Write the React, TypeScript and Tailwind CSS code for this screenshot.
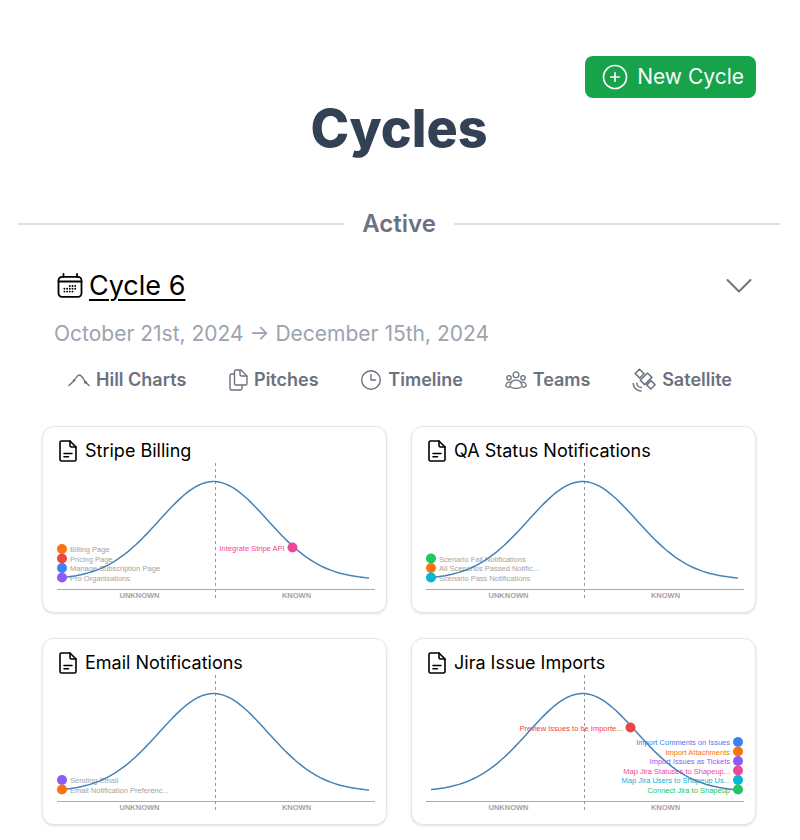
import React from 'react';

type Scope = {
  label: string;
  color: string;
  x: number;
  y: number;
  side?: 'left' | 'right';
  muted?: boolean;
};

type Pitch = {
  title: string;
  scopes: Scope[];
};

const COLORS = {
  orange: '#f97316',
  red: '#ef4444',
  blue: '#3b82f6',
  violet: '#8b5cf6',
  pink: '#ec4899',
  green: '#22c55e',
  cyan: '#06b6d4',
};

// Scopes at the foot of the hill stack upwards on either side
const START_X = 38;
const END_X = 652;
const FOOT_Y = 233;
const STEP = 19;

const pitches: Pitch[] = [
  {
    title: 'Stripe Billing',
    scopes: [
      { label: 'Billing Page', color: COLORS.orange, x: START_X, y: FOOT_Y - STEP * 3, muted: true },
      { label: 'Pricing Page', color: COLORS.red, x: START_X, y: FOOT_Y - STEP * 2, muted: true },
      { label: 'Manage Subscription Page', color: COLORS.blue, x: START_X, y: FOOT_Y - STEP, muted: true },
      { label: 'Pro Organisations', color: COLORS.violet, x: START_X, y: FOOT_Y, muted: true },
      { label: 'Integrate Stripe API', color: COLORS.pink, x: 499, y: 173, side: 'left' },
    ],
  },
  {
    title: 'QA Status Notifications',
    scopes: [
      { label: 'Scenario Fail Notifications', color: COLORS.green, x: START_X, y: FOOT_Y - STEP * 2, muted: true },
      { label: 'All Scenarios Passed Notific...', color: COLORS.orange, x: START_X, y: FOOT_Y - STEP, muted: true },
      { label: 'Scenario Pass Notifications', color: COLORS.cyan, x: START_X, y: FOOT_Y, muted: true },
    ],
  },
  {
    title: 'Email Notifications',
    scopes: [
      { label: 'Sending Email', color: COLORS.violet, x: START_X, y: FOOT_Y - STEP, muted: true },
      { label: 'Email Notification Preferenc...', color: COLORS.orange, x: START_X, y: FOOT_Y, muted: true },
    ],
  },
  {
    title: 'Jira Issue Imports',
    scopes: [
      { label: 'Preview Issues to be Importe...', color: COLORS.red, x: 437, y: 109, side: 'left' },
      { label: 'Import Comments on Issues', color: COLORS.blue, x: END_X, y: FOOT_Y - STEP * 5, side: 'left' },
      { label: 'Import Attachments', color: COLORS.orange, x: END_X, y: FOOT_Y - STEP * 4, side: 'left' },
      { label: 'Import Issues as Tickets', color: COLORS.violet, x: END_X, y: FOOT_Y - STEP * 3, side: 'left' },
      { label: 'Map Jira Statuses to Shapeup...', color: COLORS.pink, x: END_X, y: FOOT_Y - STEP * 2, side: 'left' },
      { label: 'Map Jira Users to Shapeup Us...', color: COLORS.cyan, x: END_X, y: FOOT_Y - STEP, side: 'left' },
      { label: 'Connect Jira to Shapeup', color: COLORS.green, x: END_X, y: FOOT_Y, side: 'left' },
    ],
  },
];

const hillPath = (() => {
  const points: string[] = [];
  for (let i = 0; i <= 88; i++) {
    const x = START_X + ((END_X - START_X) * i) / 88;
    const d = (x - 341) / 108;
    const y = 237 - 196 * Math.exp((-d * d) / 2);
    points.push(`${x.toFixed(1)} ${y.toFixed(1)}`);
  }
  return `M${points.join('L')}`;
})();

const HillChart = ({ scopes }: { scopes: Scope[] }) => (
  <svg viewBox="0 4 686 298" className="block w-full font-['Liberation_Sans',Arial,sans-serif]" role="img" aria-label="Hill chart">
    <line x1="345" y1="4" x2="345" y2="275" stroke="#999" strokeWidth="2" strokeDasharray="6 6" />
    <line x1="28" y1="257" x2="664" y2="257" stroke="#aaa" strokeWidth="2" />
    <text x="193" y="274" textAnchor="middle" className="text-[15px] font-bold" fill="#a3a3a3">UNKNOWN</text>
    <text x="507" y="274" textAnchor="middle" className="text-[15px] font-bold" fill="#a3a3a3">KNOWN</text>
    {scopes.map((scope) => (
      <text
        key={scope.label}
        x={scope.side === 'left' ? scope.x - 16 : scope.x + 16}
        y={scope.y + 6}
        textAnchor={scope.side === 'left' ? 'end' : 'start'}
        fill={scope.muted ? '#a3a3a3' : scope.color}
        className="text-[15px]"
      >
        {scope.label}
      </text>
    ))}
    <path d={hillPath} fill="none" stroke="#4682b4" strokeWidth="3" />
    {scopes.map((scope) => (
      <circle key={scope.label} cx={scope.x} cy={scope.y} r="10" fill={scope.color} />
    ))}
  </svg>
);

const CalendarIcon = () => (
  <svg viewBox="0 0 26 26" className="h-[26px] w-[26px]" fill="none" stroke="currentColor" strokeWidth="1.8" strokeLinecap="round" aria-hidden="true">
    <rect x="1.5" y="3.8" width="23" height="20" rx="3.5" />
    <path d="M1.5 8.500h23M6.500 1v3M20 1v3" />
    <path strokeWidth="1.900" d="M12.800 13h.01M15.500 13h.01M18.200 13h.01M7.400 15.800h.01M10.100 15.800h.01M12.800 15.800h.01M15.500 15.800h.01M18.200 15.800h.01M7.400 18.600h.01M10.100 18.600h.01M12.800 18.600h.01M15.500 18.600h.01" />
  </svg>
);

const DocumentIcon = () => (
  <svg viewBox="0 0 18 22" className="h-[22px] w-[18px]" fill="none" stroke="currentColor" strokeWidth="1.6" strokeLinecap="round" strokeLinejoin="round" aria-hidden="true">
    <path d="M11 1H2.5A1.5 1.5 0 0 0 1 2.5v17A1.5 1.5 0 0 0 2.5 21h13a1.5 1.5 0 0 0 1.5-1.5V7L11 1Z" />
    <path d="M11 1v4.5A1.5 1.5 0 0 0 12.5 7H17M5 13.5h8M5 16.7h4.5" />
  </svg>
);

const HillIcon = () => (
  <svg viewBox="0 0 22 14" className="h-[14px] w-[22px]" fill="none" stroke="currentColor" strokeWidth="1.4" strokeLinecap="round" aria-hidden="true">
    <path d="M1 12.5 6 7.8C8 5.500 8.800 2 11.300 2S15 5.500 17 8.500L21 12.500" />
    <circle cx="6" cy="7.300" r="1.200" fill="currentColor" stroke="none" />
    <circle cx="17.500" cy="9.200" r="1.500" fill="currentColor" stroke="none" />
  </svg>
);

const PitchesIcon = () => (
  <svg viewBox="0 0 20 22" className="h-[22px] w-5" fill="none" stroke="currentColor" strokeWidth="1.4" strokeLinejoin="round" aria-hidden="true">
    <path d="M13 1H8a1.5 1.5 0 0 0-1.5 1.5v12A1.5 1.5 0 0 0 8 16h9.5a1.5 1.5 0 0 0 1.5-1.5V7l-6-6Z" />
    <path d="M12 1v4.5A1.5 1.5 0 0 0 13.5 7H19M6.5 5h-3A1.5 1.5 0 0 0 2 6.5v13A1.5 1.5 0 0 0 3.5 21h9a1.5 1.5 0 0 0 1.5-1.5V16" />
  </svg>
);

const TimelineIcon = () => (
  <svg viewBox="0 0 22 22" className="h-[22px] w-[22px]" fill="none" stroke="currentColor" strokeWidth="1.4" strokeLinecap="round" strokeLinejoin="round" aria-hidden="true">
    <circle cx="11" cy="11" r="9.3" />
    <path d="M11 5.5V11h4.5" />
  </svg>
);

const TeamsIcon = () => (
  <svg viewBox="0 0 22 20" className="h-5 w-[22px]" fill="none" stroke="currentColor" strokeWidth="1.3" strokeLinejoin="round" aria-hidden="true">
    <circle cx="11" cy="4.8" r="2.9" />
    <circle cx="4" cy="7.8" r="2.2" />
    <circle cx="18" cy="7.8" r="2.2" />
    <path d="M11 10.2c-3.5 0-5.500 2.600-6 5.300-.3 1.500 2.500 2.900 6 2.900s6.300-1.400 6-2.900c-.5-2.700-2.500-5.300-6-5.300Z" />
    <path d="M5.800 12.200C3 11.500 1 13.300.8 15.600c0 1 1.500 1.700 4 1.700M16.200 12.200c2.800-.7 4.800 1.100 5 3.400 0 1-1.500 1.700-4 1.700" />
  </svg>
);

const SatelliteIcon = () => (
  <svg viewBox="0 0 24 24" className="h-6 w-6" fill="none" stroke="currentColor" strokeWidth="1.5" strokeLinecap="round" strokeLinejoin="round" aria-hidden="true">
    <path d="M7.5 1.2 3.2 5.5l4.6 4.6 4.3-4.3-4.6-4.6ZM19 12.6l-4.3 4.3 4.1 4.1 4.3-4.3-4.1-4.1Z" />
    <path d="m15.500 5-7.200 7.200 4.400 4.400 7.200-7.200L15.500 5Z" />
    <path d="M4.800 15.200a4.600 4.600 0 0 0 4.600 4.400M1.200 15.500a7.600 7.600 0 0 0 7.800 7.400" />
  </svg>
);

const tabs = [
  { name: 'Hill Charts', icon: <HillIcon /> },
  { name: 'Pitches', icon: <PitchesIcon /> },
  { name: 'Timeline', icon: <TimelineIcon /> },
  { name: 'Teams', icon: <TeamsIcon /> },
  { name: 'Satellite', icon: <SatelliteIcon /> },
];

const PitchCard = ({ pitch }: { pitch: Pitch }) => (
  <article className="overflow-hidden rounded-xl border border-gray-200 bg-white shadow-sm">
    <h3 className="flex h-9 items-end pl-4 text-lg leading-6 text-black">
      <a href="#" className="flex h-6 items-center gap-2">
        <DocumentIcon />
        {pitch.title}
      </a>
    </h3>
    <HillChart scopes={pitch.scopes} />
  </article>
);

const App: React.FC = () => {
  return (
    <main className="bg-white pt-14 pr-5 pb-3 pl-[18px] font-['Inter',sans-serif]">
      <div className="flex justify-end px-6">
        <button type="button" className="flex h-[42px] items-center gap-2 rounded-lg bg-[#16a34a] pr-3 pl-4 text-[21px] text-[#f9fafb]">
          <svg viewBox="0 0 28 28" className="h-7 w-7" fill="none" stroke="currentColor" strokeWidth="1.7" strokeLinecap="round" aria-hidden="true">
            <circle cx="14" cy="14" r="11.5" />
            <path d="M14 9.8v8.4M9.8 14h8.4" />
          </svg>
          New Cycle
        </button>
      </div>

      <h1 className="text-center text-[52px] leading-[62px] font-extrabold text-[#334155]">Cycles</h1>

      <div className="mt-12 flex items-center gap-[18px]">
        <div className="h-[2px] flex-1 bg-[#dedfe2]" />
        <h2 className="text-2xl leading-8 font-semibold text-[#6b7280]">Active</h2>
        <div className="h-[2px] flex-1 bg-[#dedfe2]" />
      </div>

      <section className="mt-[26px] px-6">
        <div className="flex items-center justify-between pr-1 pl-[15px]">
          <div className="flex items-center gap-[6px]">
            <CalendarIcon />
            <a href="#" className="text-[27px] leading-10 text-black underline decoration-2 underline-offset-4">Cycle 6</a>
          </div>
          <button type="button" aria-label="Collapse cycle" className="text-[#6b7280]">
            <svg viewBox="0 0 26 16" className="h-4 w-[26px]" fill="none" stroke="currentColor" strokeWidth="2" strokeLinecap="round" strokeLinejoin="round" aria-hidden="true">
              <path d="m1.5 2 11.5 11.5L24.5 2" />
            </svg>
          </button>
        </div>

        <p className="mt-3 pl-3 text-[21px] leading-8 text-[#9ca3af]">October 21st, 2024 → December 15th, 2024</p>

        <nav className="mt-4 flex items-center justify-between pr-6 pl-[26px]">
          {tabs.map((tab) => (
            <a key={tab.name} href="#" className="flex h-7 items-center gap-[6px] text-lg font-semibold text-[#6b7280]">
              {tab.icon}
              {tab.name}
            </a>
          ))}
        </nav>

        <div className="mt-8 grid grid-cols-2 gap-x-6 gap-y-[25px]">
          {pitches.map((pitch) => (
            <PitchCard key={pitch.title} pitch={pitch} />
          ))}
        </div>
      </section>
    </main>
  );
};

export default App;
